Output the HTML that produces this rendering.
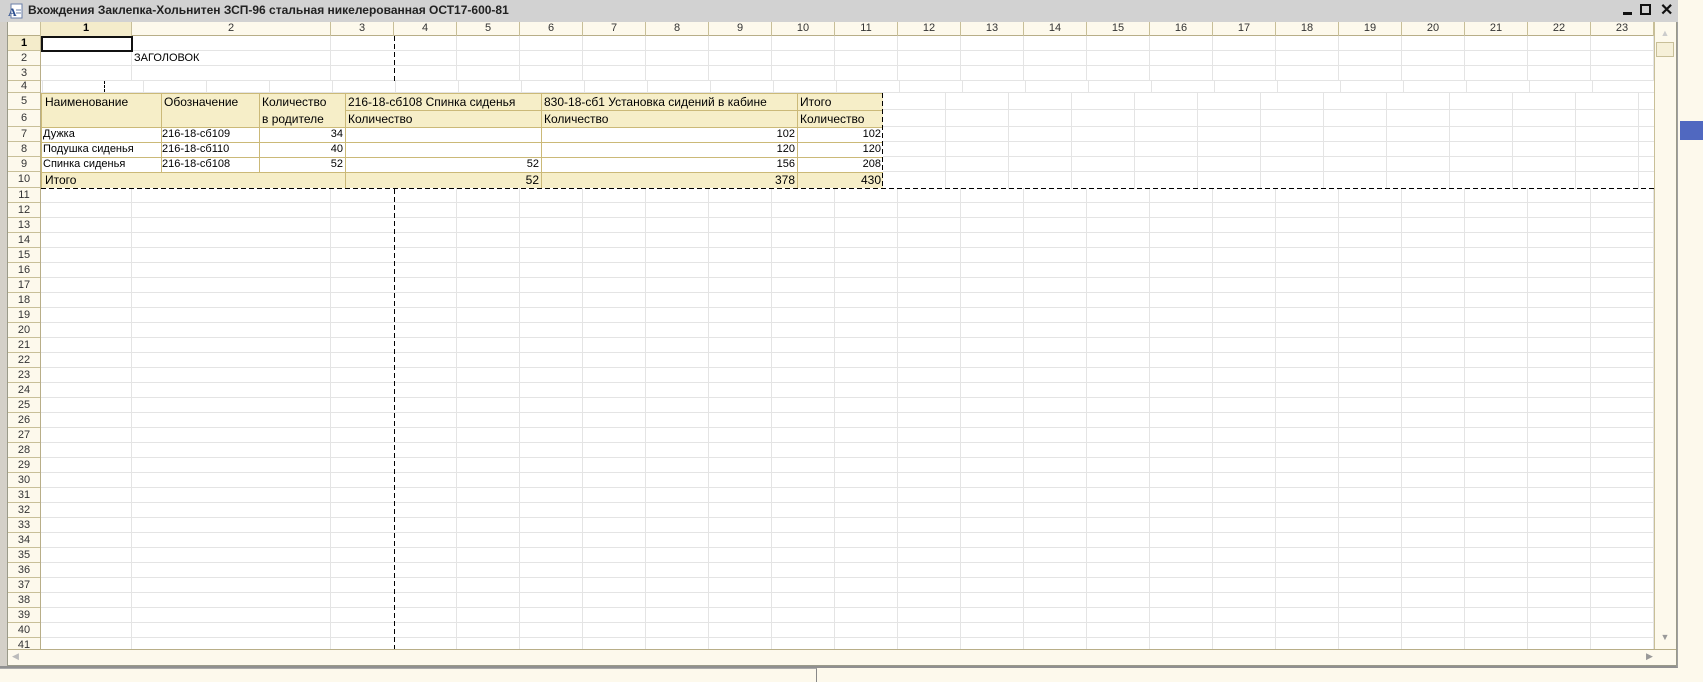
<!DOCTYPE html>
<html><head><meta charset="utf-8"><style>
*{margin:0;padding:0;box-sizing:border-box}
body{width:1703px;height:682px;overflow:hidden;background:#fdf9ec;font-family:"Liberation Sans",Arial,sans-serif;position:relative}
.a{position:absolute}
.t{font-size:11px;color:#000;white-space:nowrap;line-height:15px}
.hd{font-size:12px;line-height:17px}
</style></head><body>
<!-- window frame -->
<div class="a" style="left:0;top:0;width:1678px;height:668px;background:#d4d0c8;border-right:2px solid #a0a0a0;border-bottom:2px solid #909090"></div>
<div class="a" style="left:0;top:0;width:1678px;height:22px;background:#d2d2d2"></div>
<svg class="a" style="left:8px;top:3px" width="16" height="16"><rect x="3" y="1" width="11" height="14" fill="#fff" stroke="#6a7fa8"/><text x="0" y="13" font-size="12" font-weight="bold" fill="#2d4f8f" font-family="Liberation Serif">A</text><line x1="8" y1="7" x2="13" y2="7" stroke="#6a7fa8"/><line x1="8" y1="10" x2="13" y2="10" stroke="#6a7fa8"/></svg>
<div class="a" style="left:28px;top:3px;font-size:12px;font-weight:bold;color:#222;line-height:15px">Вхождения Заклепка-Хольнитен ЗСП-96 стальная никелерованная ОСТ17-600-81</div>
<div class="a" style="left:1623px;top:12px;width:9px;height:3px;background:#111"></div>
<div class="a" style="left:1640px;top:4px;width:11px;height:11px;border:2px solid #111;border-top-width:2px"></div>
<div class="a" style="left:1660px;top:0px;font-size:16px;font-weight:bold;color:#111">✕</div>
<!-- sheet area -->
<div class="a" style="left:7px;top:22px;width:1670px;height:644px;background:#fff;border:1px solid #9a9a8a"></div>
<!-- grid background rows 11+ -->
<div class="a" style="left:41px;top:188px;width:1613px;height:461px;background:
repeating-linear-gradient(to bottom,transparent 0 14px,#e4e4e4 14px 15px),
linear-gradient(to right,transparent 90px,#e4e4e4 90px 91px,transparent 91px 289px,#e4e4e4 289px 290px,transparent 290px)"></div>
<div class="a" style="left:394px;top:188px;width:1260px;height:461px;background:repeating-linear-gradient(to right,transparent 0 62px,#e4e4e4 62px 63px)"></div>
<!-- rows 1-3 -->
<div class="a" style="left:41px;top:36px;width:1613px;height:45px;background:
repeating-linear-gradient(to bottom,transparent 0 14px,#e4e4e4 14px 15px),
linear-gradient(to right,transparent 90px,#e4e4e4 90px 91px,transparent 91px 289px,#e4e4e4 289px 290px,transparent 290px)"></div>
<div class="a" style="left:394px;top:36px;width:1260px;height:45px;background:repeating-linear-gradient(to right,transparent 0 62px,#e4e4e4 62px 63px)"></div>
<!-- row 4 -->
<div class="a" style="left:41px;top:81px;width:1613px;height:12px;border-bottom:1px solid #e4e4e4;background:repeating-linear-gradient(to right,transparent 0 62px,#e4e4e4 62px 63px);background-position:40px 0"></div>
<!-- rows 5-10 right of table -->
<div class="a" style="left:883px;top:93px;width:771px;height:96px;background:
linear-gradient(to bottom,transparent 16px,#e4e4e4 16px 17px,transparent 17px 33px,#e4e4e4 33px 34px,transparent 34px 48px,#e4e4e4 48px 49px,transparent 49px 63px,#e4e4e4 63px 64px,transparent 64px 78px,#e4e4e4 78px 79px,transparent 79px),
repeating-linear-gradient(to right,transparent 0 62px,#e4e4e4 62px 63px)"></div>
<!-- selection cell -->
<div class="a" style="left:41px;top:36px;width:92px;height:16px;border:2px solid #111"></div>
<div class="a t" style="left:134px;top:51px">ЗАГОЛОВОК</div>
<div class="a" style="left:104px;top:81px;height:11px;border-left:1px dashed #000"></div>
<!-- table -->
<div class="a" style="left:41px;top:93px;width:842px;height:34px;background:#f6eec8"></div>
<div class="a" style="left:41px;top:172px;width:842px;height:16px;background:#f6eec8"></div>
<svg class="a" style="left:0;top:0" width="1703" height="682">
<g stroke="#cbb978" stroke-width="1" fill="none">
<line x1="41" y1="93.5" x2="883" y2="93.5"/>
<line x1="345" y1="110.5" x2="883" y2="110.5"/>
<line x1="41" y1="127.5" x2="883" y2="127.5"/>
<line x1="41" y1="142.5" x2="883" y2="142.5"/>
<line x1="41" y1="157.5" x2="883" y2="157.5"/>
<line x1="41" y1="172.5" x2="883" y2="172.5"/>
<line x1="41.5" y1="93" x2="41.5" y2="188"/>
<line x1="161.5" y1="93" x2="161.5" y2="172"/>
<line x1="259.5" y1="93" x2="259.5" y2="172"/>
<line x1="345.5" y1="93" x2="345.5" y2="188"/>
<line x1="541.5" y1="93" x2="541.5" y2="188"/>
<line x1="797.5" y1="93" x2="797.5" y2="188"/>
</g>
<g stroke="#000" stroke-width="1" stroke-dasharray="5,3">
<line x1="394.5" y1="36" x2="394.5" y2="81"/>
<line x1="394.5" y1="189" x2="394.5" y2="649"/>
<line x1="882.5" y1="93" x2="882.5" y2="188"/>
<line x1="41" y1="188.5" x2="1654" y2="188.5"/>
</g>
</svg>
<div class="a t hd" style="left:45px;top:94px">Наименование</div>
<div class="a t hd" style="left:164px;top:94px">Обозначение</div>
<div class="a t hd" style="left:262px;top:94px">Количество</div>
<div class="a t hd" style="left:262px;top:111px">в родителе</div>
<div class="a t hd" style="left:348px;top:94px">216-18-сб108 Спинка сиденья</div>
<div class="a t hd" style="left:348px;top:111px">Количество</div>
<div class="a t hd" style="left:544px;top:94px">830-18-сб1 Установка сидений в кабине</div>
<div class="a t hd" style="left:544px;top:111px">Количество</div>
<div class="a t hd" style="left:800px;top:94px">Итого</div>
<div class="a t hd" style="left:800px;top:111px">Количество</div>
<div class="a t" style="left:43px;top:127px">Дужка</div>
<div class="a t" style="left:43px;top:142px">Подушка сиденья</div>
<div class="a t" style="left:43px;top:157px">Спинка сиденья</div>
<div class="a t" style="left:162px;top:127px">216-18-сб109</div>
<div class="a t" style="left:162px;top:142px">216-18-сб110</div>
<div class="a t" style="left:162px;top:157px">216-18-сб108</div>
<div class="a t" style="left:259px;top:127px;width:84px;text-align:right">34</div>
<div class="a t" style="left:259px;top:142px;width:84px;text-align:right">40</div>
<div class="a t" style="left:259px;top:157px;width:84px;text-align:right">52</div>
<div class="a t" style="left:345px;top:157px;width:194px;text-align:right">52</div>
<div class="a t" style="left:541px;top:127px;width:254px;text-align:right">102</div>
<div class="a t" style="left:541px;top:142px;width:254px;text-align:right">120</div>
<div class="a t" style="left:541px;top:157px;width:254px;text-align:right">156</div>
<div class="a t" style="left:797px;top:127px;width:84px;text-align:right">102</div>
<div class="a t" style="left:797px;top:142px;width:84px;text-align:right">120</div>
<div class="a t" style="left:797px;top:157px;width:84px;text-align:right">208</div>
<div class="a t hd" style="left:45px;top:172px">Итого</div>
<div class="a t hd" style="left:345px;top:172px;width:194px;text-align:right">52</div>
<div class="a t hd" style="left:541px;top:172px;width:254px;text-align:right">378</div>
<div class="a t hd" style="left:797px;top:172px;width:84px;text-align:right">430</div>
<!-- column header -->
<div class="a" id="ch" style="left:8px;top:22px;width:1646px;height:14px;background:#fdf9ec;border-bottom:1px solid #b8ae88"></div>
<div class="a" style="left:8px;top:22px;width:33px;height:14px;border-right:1px solid #c8bf98"></div>
<div class="a" style="left:41px;top:22px;width:91px;height:14px;background:#f4eccb;border-right:1px solid #c8bf98;font-size:11px;font-weight:bold;text-align:center;line-height:13px">1</div>
<div class="a" style="left:132px;top:22px;width:199px;height:14px;border-right:1px solid #c8bf98;font-size:11px;text-align:center;line-height:13px;color:#333">2</div>
<div class="a" style="left:331px;top:22px;width:63px;height:14px;border-right:1px solid #c8bf98;font-size:11px;text-align:center;line-height:13px;color:#333">3</div>
<div class="a" style="left:394px;top:22px;width:1260px;height:14px;display:flex;font-size:11px;line-height:13px;color:#333">
<div style="width:63px;text-align:center;border-right:1px solid #c8bf98">4</div><div style="width:63px;text-align:center;border-right:1px solid #c8bf98">5</div><div style="width:63px;text-align:center;border-right:1px solid #c8bf98">6</div><div style="width:63px;text-align:center;border-right:1px solid #c8bf98">7</div><div style="width:63px;text-align:center;border-right:1px solid #c8bf98">8</div><div style="width:63px;text-align:center;border-right:1px solid #c8bf98">9</div><div style="width:63px;text-align:center;border-right:1px solid #c8bf98">10</div><div style="width:63px;text-align:center;border-right:1px solid #c8bf98">11</div><div style="width:63px;text-align:center;border-right:1px solid #c8bf98">12</div><div style="width:63px;text-align:center;border-right:1px solid #c8bf98">13</div><div style="width:63px;text-align:center;border-right:1px solid #c8bf98">14</div><div style="width:63px;text-align:center;border-right:1px solid #c8bf98">15</div><div style="width:63px;text-align:center;border-right:1px solid #c8bf98">16</div><div style="width:63px;text-align:center;border-right:1px solid #c8bf98">17</div><div style="width:63px;text-align:center;border-right:1px solid #c8bf98">18</div><div style="width:63px;text-align:center;border-right:1px solid #c8bf98">19</div><div style="width:63px;text-align:center;border-right:1px solid #c8bf98">20</div><div style="width:63px;text-align:center;border-right:1px solid #c8bf98">21</div><div style="width:63px;text-align:center;border-right:1px solid #c8bf98">22</div><div style="width:63px;text-align:center;border-right:1px solid #c8bf98">23</div></div>
<!-- row header -->
<div class="a" style="left:8px;top:36px;width:33px;height:613px;background:#fdf9ec;border-right:1px solid #b8ae88;font-size:11px;color:#333;text-align:center;line-height:14px;overflow:hidden">
<div style="height:15px;border-bottom:1px solid #c8bf98;background:#f4eccb;font-weight:bold;color:#000">1</div>
<div style="height:15px;border-bottom:1px solid #c8bf98">2</div>
<div style="height:15px;border-bottom:1px solid #c8bf98">3</div>
<div style="height:12px;line-height:11px;border-bottom:1px solid #c8bf98">4</div>
<div style="height:17px;line-height:16px;border-bottom:1px solid #c8bf98">5</div>
<div style="height:17px;line-height:16px;border-bottom:1px solid #c8bf98">6</div>
<div style="height:15px;border-bottom:1px solid #c8bf98">7</div>
<div style="height:15px;border-bottom:1px solid #c8bf98">8</div>
<div style="height:15px;border-bottom:1px solid #c8bf98">9</div>
<div style="height:16px;line-height:15px;border-bottom:1px solid #c8bf98">10</div>
<div style="height:15px;border-bottom:1px solid #c8bf98">11</div><div style="height:15px;border-bottom:1px solid #c8bf98">12</div><div style="height:15px;border-bottom:1px solid #c8bf98">13</div><div style="height:15px;border-bottom:1px solid #c8bf98">14</div><div style="height:15px;border-bottom:1px solid #c8bf98">15</div><div style="height:15px;border-bottom:1px solid #c8bf98">16</div><div style="height:15px;border-bottom:1px solid #c8bf98">17</div><div style="height:15px;border-bottom:1px solid #c8bf98">18</div><div style="height:15px;border-bottom:1px solid #c8bf98">19</div><div style="height:15px;border-bottom:1px solid #c8bf98">20</div><div style="height:15px;border-bottom:1px solid #c8bf98">21</div><div style="height:15px;border-bottom:1px solid #c8bf98">22</div><div style="height:15px;border-bottom:1px solid #c8bf98">23</div><div style="height:15px;border-bottom:1px solid #c8bf98">24</div><div style="height:15px;border-bottom:1px solid #c8bf98">25</div><div style="height:15px;border-bottom:1px solid #c8bf98">26</div><div style="height:15px;border-bottom:1px solid #c8bf98">27</div><div style="height:15px;border-bottom:1px solid #c8bf98">28</div><div style="height:15px;border-bottom:1px solid #c8bf98">29</div><div style="height:15px;border-bottom:1px solid #c8bf98">30</div><div style="height:15px;border-bottom:1px solid #c8bf98">31</div><div style="height:15px;border-bottom:1px solid #c8bf98">32</div><div style="height:15px;border-bottom:1px solid #c8bf98">33</div><div style="height:15px;border-bottom:1px solid #c8bf98">34</div><div style="height:15px;border-bottom:1px solid #c8bf98">35</div><div style="height:15px;border-bottom:1px solid #c8bf98">36</div><div style="height:15px;border-bottom:1px solid #c8bf98">37</div><div style="height:15px;border-bottom:1px solid #c8bf98">38</div><div style="height:15px;border-bottom:1px solid #c8bf98">39</div><div style="height:15px;border-bottom:1px solid #c8bf98">40</div><div style="height:15px;border-bottom:1px solid #c8bf98">41</div>
</div>
<!-- vertical scrollbar -->
<div class="a" style="left:1654px;top:22px;width:22px;height:627px;background:#fdf9ec;border-left:1px solid #c8bf98"></div>
<div class="a" style="left:1656px;top:24px;width:18px;height:18px;color:#ccc;font-size:9px;text-align:center;line-height:18px">▲</div>
<div class="a" style="left:1656px;top:42px;width:18px;height:15px;border:1px solid #c8bf98;background:#f6f0d8"></div>
<div class="a" style="left:1656px;top:628px;width:18px;height:18px;color:#999;font-size:9px;text-align:center;line-height:18px">▼</div>
<!-- horizontal scrollbar -->
<div class="a" style="left:8px;top:649px;width:1668px;height:16px;background:#fdf9ec;border-top:1px solid #b8ae88"></div>
<div class="a" style="left:12px;top:651px;font-size:9px;color:#bbb">◀</div>
<div class="a" style="left:1646px;top:651px;font-size:9px;color:#999">▶</div>
<!-- outside right -->
<div class="a" style="left:1680px;top:121px;width:23px;height:19px;background:#5068c0"></div>
<!-- status strip -->
<div class="a" style="left:0;top:668px;width:817px;height:14px;background:#fdf9ec;border-right:1px solid #888;border-top:1px solid #aaa"></div>
</body></html>
